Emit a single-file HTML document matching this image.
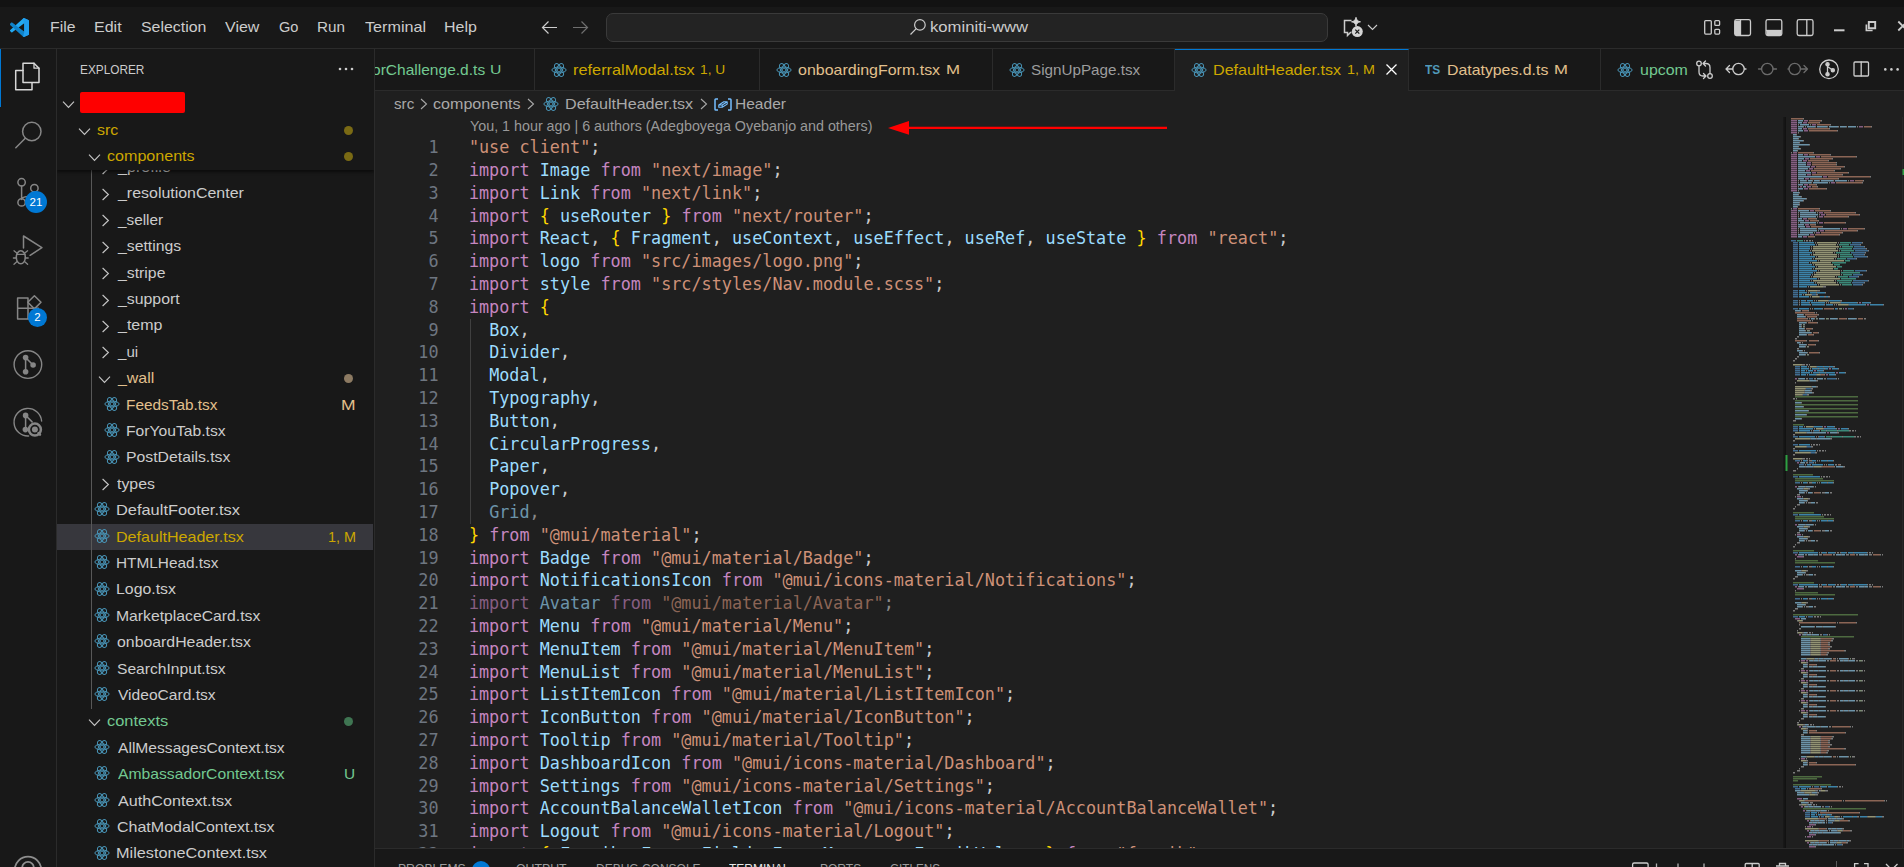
<!DOCTYPE html>
<html lang="en"><head><meta charset="utf-8"><title>DefaultHeader.tsx - kominiti-www - Visual Studio Code</title>
<style>
*{box-sizing:border-box;margin:0;padding:0}
html,body{width:1904px;height:867px;overflow:hidden;background:#1f1f1f}
body{position:relative;font-family:"Liberation Sans", sans-serif;font-size:14.6px;color:#cccccc}
.abs{position:absolute}
.t{position:absolute;display:block;white-space:pre;line-height:20px;height:20px;transform-origin:0 50%}
svg{display:block;overflow:visible}
#topstrip{left:0;top:0;width:1904px;height:7px;background:#121212;z-index:3}
#titlebar{left:0;top:6px;width:1904px;height:43px;background:#181818;border-bottom:1px solid #2b2b2b}
#cmd{left:606px;top:7px;width:722px;height:29px;border:1px solid #3a3a3a;border-radius:7px;background:#232323}
#activity{left:0;top:49px;width:57px;height:818px;background:#181818;border-right:1px solid #2b2b2b}
#sidebar{left:57px;top:49px;width:318px;height:818px;background:#181818;border-right:1px solid #2b2b2b;overflow:hidden}
#tabs{left:375px;top:49px;width:1529px;height:42px;background:#181818;overflow:hidden}
#tabs .bl{position:absolute;left:0;top:41px;width:1529px;height:1px;background:#2b2b2b}
.tab{position:absolute;top:0;height:41px;border-right:1px solid #2b2b2b}
#crumbs{left:375px;top:91px;width:1529px;height:26px}
#editor{left:375px;top:117px;width:1529px;height:731px;overflow:hidden;background:#1f1f1f}
.ln{position:absolute;left:0;width:63.5px;text-align:right;color:#6e7681;font-family:"DejaVu Sans Mono", "Liberation Mono", monospace;font-size:16.8px;height:22.8px;line-height:22.8px}
.cl{position:absolute;left:93.9px;letter-spacing:0.012px;font-family:"DejaVu Sans Mono", "Liberation Mono", monospace;font-size:16.8px;height:22.8px;line-height:22.8px;white-space:pre;color:#cccccc}
.k{color:#c586c0} .v{color:#9cdcfe} .s{color:#ce9178} .b{color:#ffd700}
.dim{opacity:.62}
.badge{border-radius:50%;background:#0078d4;color:#ffffff;font-size:11.5px;text-align:center;line-height:21px}
#panel{left:375px;top:848px;width:1529px;height:19px;background:#181818;border-top:1px solid #2b2b2b;overflow:hidden}
</style></head>
<body>
<div id="topstrip" class="abs"></div>
<div id="titlebar" class="abs">
<svg class="abs" style="left:10px;top:12px" width="19" height="19" viewBox="0 0 100 100"><path d="M96.500 10.800 75.900.900a6.200 6.200 0 0 0-7.100 1.200L29.400 38 12.200 25a4.200 4.200 0 0 0-5.300.2L1.400 30.300a4.200 4.200 0 0 0 0 6.200L16.300 50 1.400 63.600a4.200 4.200 0 0 0 0 6.200l5.500 5a4.200 4.200 0 0 0 5.300.2l17.200-13 39.400 36a6.200 6.200 0 0 0 7.100 1.200l20.600-9.900a6.200 6.200 0 0 0 3.500-5.600V16.400a6.200 6.200 0 0 0-3.500-5.600zM75 72.700 45.100 50 75 27.300z" fill="#23a9f2"/><path d="M96.500 10.800 75.900.900a6.200 6.200 0 0 0-7.100 1.200L75 27.300v45.400l-6.200 25.300a6.200 6.200 0 0 0 7.100 1.200l20.600-9.900a6.200 6.200 0 0 0 3.500-5.600V16.400a6.200 6.200 0 0 0-3.500-5.600z" fill="#1f9cf0" opacity=".9"/><path d="M12.200 25a4.200 4.200 0 0 0-5.300.2L1.400 30.300a4.200 4.200 0 0 0 0 6.200L68.800 98.100 75 72.700z" fill="#0065a9" opacity=".55"/></svg>
<span class="t" style="left:50.04px;top:11px;color:#cccccc;transform:scaleX(1.0803);">File</span>
<span class="t" style="left:94.22px;top:11px;color:#cccccc;transform:scaleX(1.0984);">Edit</span>
<span class="t" style="left:140.98px;top:11px;color:#cccccc;transform:scaleX(1.0897);">Selection</span>
<span class="t" style="left:225.40px;top:11px;color:#cccccc;transform:scaleX(1.0959);">View</span>
<span class="t" style="left:279.07px;top:11px;color:#cccccc;transform:scaleX(1.0013);">Go</span>
<span class="t" style="left:317.48px;top:11px;color:#cccccc;transform:scaleX(1.0426);">Run</span>
<span class="t" style="left:364.78px;top:11px;color:#cccccc;transform:scaleX(1.1066);">Terminal</span>
<span class="t" style="left:444.22px;top:11px;color:#cccccc;transform:scaleX(1.0938);">Help</span>
<svg class="abs" style="left:541px;top:13px" width="17" height="17" viewBox="0 0 17 17" fill="none" stroke="#cccccc" stroke-width="1.200"><path d="M16 8.500H1.800M7.500 2.500 1.500 8.500l6 6"/></svg>
<svg class="abs" style="left:572px;top:13px" width="17" height="17" viewBox="0 0 17 17" fill="none" stroke="#6f6f6f" stroke-width="1.200"><path d="M1 8.500h14.200M9.500 2.500l6 6-6 6"/></svg>
<div id="cmd" class="abs"><svg class="abs" style="left:302px;top:4px" width="18" height="18" viewBox="0 0 18 18" fill="none" stroke="#cccccc" stroke-width="1.200"><circle cx="10.900" cy="6.900" r="5.300"/><path d="M7.200 10.700 1.500 16.500"/></svg><span class="t" style="left:323.42px;top:3px;color:#cccccc;transform:scaleX(1.1417);">kominiti-www</span></div>
<svg class="abs" style="left:1342px;top:11px" width="24" height="24" viewBox="0 0 24 24" fill="none"><path d="M9.500 3.500H2.500V15.500H5.500V18.500L8.500 15.500H9.500" stroke="#cccccc" stroke-width="1.500"/><path d="M14 0.300C14.500 3 15.800 4.300 18.500 4.800 15.800 5.300 14.500 6.600 14 9.300 13.500 6.600 12.200 5.300 9.500 4.800 12.200 4.300 13.500 3 14 0.300z" fill="#d4d4d4" stroke="#d4d4d4" stroke-width=".9" stroke-linejoin="round"/><circle cx="15.300" cy="14.600" r="5.500" fill="#d4d4d4"/><path d="M13.300 12.600l4 4M17.300 12.600l-4 4" stroke="#181818" stroke-width="1.300"/></svg>
<svg class="abs" style="left:1367px;top:18px" width="11" height="7" viewBox="0 0 11 7" fill="none" stroke="#cccccc" stroke-width="1.100"><path d="M1 1l4.500 4.500L10 1"/></svg>
<svg class="abs" style="left:1700px;top:10px" width="204" height="24" viewBox="1700 16 204 24" fill="none" stroke="#cccccc" stroke-width="1.300"><rect x="1704.700" y="20.600" width="6.600" height="13.500" rx="1"/><rect x="1714.800" y="20.600" width="4.800" height="4.800" rx="1"/><rect x="1714.800" y="29.300" width="4.800" height="4.800" rx="1"/><rect x="1734.700" y="19.700" width="15.800" height="15.800" rx="1.800"/><path d="M1735 20.500h5.500v14.500h-5.500z" fill="#cccccc" stroke="none"/><path d="M1740.500 20v15.500"/><rect x="1766" y="19.700" width="15.800" height="15.800" rx="1.800"/><path d="M1766.500 30.500h15v4.500h-15z" fill="#cccccc" stroke="none"/><path d="M1766 30.500h15.800"/><rect x="1797.200" y="19.700" width="15.800" height="15.800" rx="1.800"/><path d="M1806.800 20v15.500"/><path d="M1834 30.300h10.500" stroke-width="2"/><path d="M1868.800 22h6.400v6.200h-6.400z" stroke-width="1.900"/><path d="M1866.400 24.500v6h6.200" stroke-width="1.700"/><path d="M1898.300 21.500l9 9M1898.300 30.500l9-9" stroke-width="1.800"/></svg>
</div>
<div id="activity" class="abs"><div class="abs" style="left:0;top:0;width:1.300px;height:58px;background:#0078d4"></div><svg class="abs" style="left:0;top:0" width="57" height="818" viewBox="0 49 57 818" fill="none" stroke="#868686" stroke-width="1.500" stroke-linejoin="round" stroke-linecap="round"><g stroke="#d7d7d7"><path d="M23 63.200h11l5 5v14.300h-16z"/><path d="M34 63.200v5h5" stroke-width="1.300"/><path d="M23 70.500h-7.300v19.300h16.300v-7"/></g><circle cx="31.800" cy="131.500" r="9.200"/><path d="M25.300 138.200 15.800 147.800"/><circle cx="21.600" cy="182.300" r="3.700"/><circle cx="21.600" cy="202.400" r="3.700"/><circle cx="34.400" cy="188.200" r="3.700"/><path d="M21.600 186v12.700M34.400 192c0 3.200-2.500 4.300-6.500 4.500-3.500.2-6.300 1.200-6.300 3"/><path d="M23.500 248v-12l18.400 11.700-11.800 7.600"/><ellipse cx="20.800" cy="257.300" rx="4.500" ry="6.500"/><path d="M16.500 254.300h8.600M14 250.800l2.800 2.200M27.600 250.800l-2.800 2.200M13.400 258h2.900M25.300 258h2.900M14 264.200l2.800-2.500M27.600 264.200l-2.800-2.500" stroke-width="1.300"/><path d="M17.600 297.900h10.400v10.300h-10.400zM17.600 308.200h10.400v10.700h-10.400zM28 308.200h10.400v10.700h-10.400z"/><path d="M34.400 295.700l6.600 6.600-6.600 6.600-6.600-6.600z"/><circle cx="27.900" cy="364.600" r="13.800" stroke-width="1.400"/><path d="M25.600 357.600v14.200M25.600 357.600l7.500 7.400"/><circle cx="25.600" cy="357.600" r="2.800" fill="#868686" stroke="none"/><circle cx="25.600" cy="371.800" r="2.800" fill="#868686" stroke="none"/><circle cx="33.100" cy="365" r="2.800" fill="#868686" stroke="none"/><path d="M41.600 421a13.800 13.800 0 1 0-13 15" stroke-width="1.400"/><path d="M25.600 415.400v14.200M25.600 415.400l6.500 6.500"/><circle cx="25.600" cy="415.400" r="2.800" fill="#868686" stroke="none"/><circle cx="25.400" cy="429.600" r="2.800" fill="#868686" stroke="none"/><circle cx="34.900" cy="429.600" r="6" stroke-width="2.500"/><circle cx="34.900" cy="429.600" r="3" fill="#868686" stroke="none"/><path d="M38.500 433.200l1.500 1.500" stroke-width="2.500"/><circle cx="28" cy="870" r="13.300" stroke-width="1.800" stroke="#8e8e8e"/><circle cx="28" cy="867.700" r="5.800" stroke-width="1.800" stroke="#8e8e8e"/></svg><div class="abs badge" style="left:25px;top:142.400px;width:22px;height:22px;line-height:22px">21</div><div class="abs badge" style="left:27.900px;top:259.200px;width:19px;height:19px;line-height:19px">2</div></div>
<div id="sidebar" class="abs">
<svg class="abs" style="left:43.5px;top:112.5px" width="9" height="13" viewBox="0 0 9 13" fill="none" stroke="#c5c5c5" stroke-width="1.150"><path d="M1.600 1 7.400 6.500 1.600 12"/></svg>
<span class="t" style="left:60.62px;top:108px;color:#cccccc;transform:scaleX(1.1051);">_profile</span>
<svg class="abs" style="left:43.5px;top:138.9px" width="9" height="13" viewBox="0 0 9 13" fill="none" stroke="#c5c5c5" stroke-width="1.150"><path d="M1.600 1 7.400 6.500 1.600 12"/></svg>
<span class="t" style="left:60.62px;top:134px;color:#cccccc;transform:scaleX(1.0924);">_resolutionCenter</span>
<svg class="abs" style="left:43.5px;top:165.3px" width="9" height="13" viewBox="0 0 9 13" fill="none" stroke="#c5c5c5" stroke-width="1.150"><path d="M1.600 1 7.400 6.500 1.600 12"/></svg>
<span class="t" style="left:60.61px;top:161px;color:#cccccc;transform:scaleX(1.0477);">_seller</span>
<svg class="abs" style="left:43.5px;top:191.7px" width="9" height="13" viewBox="0 0 9 13" fill="none" stroke="#c5c5c5" stroke-width="1.150"><path d="M1.600 1 7.400 6.500 1.600 12"/></svg>
<span class="t" style="left:60.62px;top:187px;color:#cccccc;transform:scaleX(1.0798);">_settings</span>
<svg class="abs" style="left:43.5px;top:218.1px" width="9" height="13" viewBox="0 0 9 13" fill="none" stroke="#c5c5c5" stroke-width="1.150"><path d="M1.600 1 7.400 6.500 1.600 12"/></svg>
<span class="t" style="left:60.62px;top:214px;color:#cccccc;transform:scaleX(1.0826);">_stripe</span>
<svg class="abs" style="left:43.5px;top:244.5px" width="9" height="13" viewBox="0 0 9 13" fill="none" stroke="#c5c5c5" stroke-width="1.150"><path d="M1.600 1 7.400 6.500 1.600 12"/></svg>
<span class="t" style="left:60.62px;top:240px;color:#cccccc;transform:scaleX(1.0861);">_support</span>
<svg class="abs" style="left:43.5px;top:270.9px" width="9" height="13" viewBox="0 0 9 13" fill="none" stroke="#c5c5c5" stroke-width="1.150"><path d="M1.600 1 7.400 6.500 1.600 12"/></svg>
<span class="t" style="left:60.62px;top:266px;color:#cccccc;transform:scaleX(1.0944);">_temp</span>
<svg class="abs" style="left:43.5px;top:297.3px" width="9" height="13" viewBox="0 0 9 13" fill="none" stroke="#c5c5c5" stroke-width="1.150"><path d="M1.600 1 7.400 6.500 1.600 12"/></svg>
<span class="t" style="left:60.60px;top:293px;color:#cccccc;transform:scaleX(1.0341);">_ui</span>
<svg class="abs" style="left:40.5px;top:325.6px" width="13" height="9" viewBox="0 0 13 9" fill="none" stroke="#c5c5c5" stroke-width="1.150"><path d="M1 1.600 6.500 7.400 12 1.600"/></svg>
<span class="t" style="left:60.62px;top:319px;color:#e2c08d;transform:scaleX(1.0910);">_wall</span>
<span class="abs" style="left:287.0px;top:324.6px;width:9px;height:9px;border-radius:50%;background:#8c7a62"></span>
<svg class="abs" style="left:47.0px;top:346.8px" width="16" height="16" viewBox="-8 -8 16 16" fill="none" stroke="#4893b5" stroke-width="1"><ellipse rx="7.100" ry="2.900"/><ellipse rx="7.100" ry="2.900" transform="rotate(60)"/><ellipse rx="7.100" ry="2.900" transform="rotate(120)"/><circle r="1.900" stroke-width="1"/></svg>
<span class="t" style="left:68.87px;top:346px;color:#e2c08d;transform:scaleX(1.0528);">FeedsTab.tsx</span>
<span class="t" style="left:284.20px;top:346px;color:#e2c08d;transform:scaleX(1.1974);">M</span>
<svg class="abs" style="left:47.0px;top:373.2px" width="16" height="16" viewBox="-8 -8 16 16" fill="none" stroke="#4893b5" stroke-width="1"><ellipse rx="7.100" ry="2.900"/><ellipse rx="7.100" ry="2.900" transform="rotate(60)"/><ellipse rx="7.100" ry="2.900" transform="rotate(120)"/><circle r="1.900" stroke-width="1"/></svg>
<span class="t" style="left:68.85px;top:372px;color:#cccccc;transform:scaleX(1.0736);">ForYouTab.tsx</span>
<svg class="abs" style="left:47.0px;top:399.6px" width="16" height="16" viewBox="-8 -8 16 16" fill="none" stroke="#4893b5" stroke-width="1"><ellipse rx="7.100" ry="2.900"/><ellipse rx="7.100" ry="2.900" transform="rotate(60)"/><ellipse rx="7.100" ry="2.900" transform="rotate(120)"/><circle r="1.900" stroke-width="1"/></svg>
<span class="t" style="left:68.84px;top:398px;color:#cccccc;transform:scaleX(1.0812);">PostDetails.tsx</span>
<svg class="abs" style="left:43.5px;top:429.3px" width="9" height="13" viewBox="0 0 9 13" fill="none" stroke="#c5c5c5" stroke-width="1.150"><path d="M1.600 1 7.400 6.500 1.600 12"/></svg>
<span class="t" style="left:60.06px;top:425px;color:#cccccc;transform:scaleX(1.0859);">types</span>
<svg class="abs" style="left:37.4px;top:452.4px" width="16" height="16" viewBox="-8 -8 16 16" fill="none" stroke="#4893b5" stroke-width="1"><ellipse rx="7.100" ry="2.900"/><ellipse rx="7.100" ry="2.900" transform="rotate(60)"/><ellipse rx="7.100" ry="2.900" transform="rotate(120)"/><circle r="1.900" stroke-width="1"/></svg>
<span class="t" style="left:59.19px;top:451px;color:#cccccc;transform:scaleX(1.1232);">DefaultFooter.tsx</span>
<div class="abs" style="left:0;top:475px;width:316px;height:26px;background:#37373d"></div>
<svg class="abs" style="left:37.4px;top:478.8px" width="16" height="16" viewBox="-8 -8 16 16" fill="none" stroke="#4893b5" stroke-width="1"><ellipse rx="7.100" ry="2.900"/><ellipse rx="7.100" ry="2.900" transform="rotate(60)"/><ellipse rx="7.100" ry="2.900" transform="rotate(120)"/><circle r="1.900" stroke-width="1"/></svg>
<span class="t" style="left:59.21px;top:478px;color:#cca700;transform:scaleX(1.1015);">DefaultHeader.tsx</span>
<span class="t" style="left:270.52px;top:478px;color:#cca700;transform:scaleX(0.9872);">1, M</span>
<svg class="abs" style="left:37.4px;top:505.2px" width="16" height="16" viewBox="-8 -8 16 16" fill="none" stroke="#4893b5" stroke-width="1"><ellipse rx="7.100" ry="2.900"/><ellipse rx="7.100" ry="2.900" transform="rotate(60)"/><ellipse rx="7.100" ry="2.900" transform="rotate(120)"/><circle r="1.900" stroke-width="1"/></svg>
<span class="t" style="left:59.27px;top:504px;color:#cccccc;transform:scaleX(1.0524);">HTMLHead.tsx</span>
<svg class="abs" style="left:37.4px;top:531.6px" width="16" height="16" viewBox="-8 -8 16 16" fill="none" stroke="#4893b5" stroke-width="1"><ellipse rx="7.100" ry="2.900"/><ellipse rx="7.100" ry="2.900" transform="rotate(60)"/><ellipse rx="7.100" ry="2.900" transform="rotate(120)"/><circle r="1.900" stroke-width="1"/></svg>
<span class="t" style="left:59.23px;top:530px;color:#cccccc;transform:scaleX(1.0859);">Logo.tsx</span>
<svg class="abs" style="left:37.4px;top:558.0px" width="16" height="16" viewBox="-8 -8 16 16" fill="none" stroke="#4893b5" stroke-width="1"><ellipse rx="7.100" ry="2.900"/><ellipse rx="7.100" ry="2.900" transform="rotate(60)"/><ellipse rx="7.100" ry="2.900" transform="rotate(120)"/><circle r="1.900" stroke-width="1"/></svg>
<span class="t" style="left:59.24px;top:557px;color:#cccccc;transform:scaleX(1.0787);">MarketplaceCard.tsx</span>
<svg class="abs" style="left:37.4px;top:584.4px" width="16" height="16" viewBox="-8 -8 16 16" fill="none" stroke="#4893b5" stroke-width="1"><ellipse rx="7.100" ry="2.900"/><ellipse rx="7.100" ry="2.900" transform="rotate(60)"/><ellipse rx="7.100" ry="2.900" transform="rotate(120)"/><circle r="1.900" stroke-width="1"/></svg>
<span class="t" style="left:59.87px;top:583px;color:#cccccc;transform:scaleX(1.0861);">onboardHeader.tsx</span>
<svg class="abs" style="left:37.4px;top:610.8px" width="16" height="16" viewBox="-8 -8 16 16" fill="none" stroke="#4893b5" stroke-width="1"><ellipse rx="7.100" ry="2.900"/><ellipse rx="7.100" ry="2.900" transform="rotate(60)"/><ellipse rx="7.100" ry="2.900" transform="rotate(120)"/><circle r="1.900" stroke-width="1"/></svg>
<span class="t" style="left:59.80px;top:610px;color:#cccccc;transform:scaleX(1.0709);">SearchInput.tsx</span>
<svg class="abs" style="left:37.4px;top:637.2px" width="16" height="16" viewBox="-8 -8 16 16" fill="none" stroke="#4893b5" stroke-width="1"><ellipse rx="7.100" ry="2.900"/><ellipse rx="7.100" ry="2.900" transform="rotate(60)"/><ellipse rx="7.100" ry="2.900" transform="rotate(120)"/><circle r="1.900" stroke-width="1"/></svg>
<span class="t" style="left:60.50px;top:636px;color:#cccccc;transform:scaleX(1.0676);">VideoCard.tsx</span>
<svg class="abs" style="left:30.9px;top:668.8px" width="13" height="9" viewBox="0 0 13 9" fill="none" stroke="#c5c5c5" stroke-width="1.150"><path d="M1 1.600 6.500 7.400 12 1.600"/></svg>
<span class="t" style="left:50.04px;top:662px;color:#73c991;transform:scaleX(1.1259);">contexts</span>
<span class="abs" style="left:287.0px;top:667.8px;width:9px;height:9px;border-radius:50%;background:#3f7552"></span>
<svg class="abs" style="left:37.4px;top:690.0px" width="16" height="16" viewBox="-8 -8 16 16" fill="none" stroke="#4893b5" stroke-width="1"><ellipse rx="7.100" ry="2.900"/><ellipse rx="7.100" ry="2.900" transform="rotate(60)"/><ellipse rx="7.100" ry="2.900" transform="rotate(120)"/><circle r="1.900" stroke-width="1"/></svg>
<span class="t" style="left:60.50px;top:689px;color:#cccccc;transform:scaleX(1.0698);">AllMessagesContext.tsx</span>
<svg class="abs" style="left:37.4px;top:716.4px" width="16" height="16" viewBox="-8 -8 16 16" fill="none" stroke="#4893b5" stroke-width="1"><ellipse rx="7.100" ry="2.900"/><ellipse rx="7.100" ry="2.900" transform="rotate(60)"/><ellipse rx="7.100" ry="2.900" transform="rotate(120)"/><circle r="1.900" stroke-width="1"/></svg>
<span class="t" style="left:60.50px;top:715px;color:#73c991;transform:scaleX(1.0754);">AmbassadorContext.tsx</span>
<span class="t" style="left:287.04px;top:715px;color:#73c991;transform:scaleX(1.0574);">U</span>
<svg class="abs" style="left:37.4px;top:742.8px" width="16" height="16" viewBox="-8 -8 16 16" fill="none" stroke="#4893b5" stroke-width="1"><ellipse rx="7.100" ry="2.900"/><ellipse rx="7.100" ry="2.900" transform="rotate(60)"/><ellipse rx="7.100" ry="2.900" transform="rotate(120)"/><circle r="1.900" stroke-width="1"/></svg>
<span class="t" style="left:60.50px;top:742px;color:#cccccc;transform:scaleX(1.1075);">AuthContext.tsx</span>
<svg class="abs" style="left:37.4px;top:769.2px" width="16" height="16" viewBox="-8 -8 16 16" fill="none" stroke="#4893b5" stroke-width="1"><ellipse rx="7.100" ry="2.900"/><ellipse rx="7.100" ry="2.900" transform="rotate(60)"/><ellipse rx="7.100" ry="2.900" transform="rotate(120)"/><circle r="1.900" stroke-width="1"/></svg>
<span class="t" style="left:59.70px;top:768px;color:#cccccc;transform:scaleX(1.0967);">ChatModalContext.tsx</span>
<svg class="abs" style="left:37.4px;top:795.6px" width="16" height="16" viewBox="-8 -8 16 16" fill="none" stroke="#4893b5" stroke-width="1"><ellipse rx="7.100" ry="2.900"/><ellipse rx="7.100" ry="2.900" transform="rotate(60)"/><ellipse rx="7.100" ry="2.900" transform="rotate(120)"/><circle r="1.900" stroke-width="1"/></svg>
<span class="t" style="left:59.20px;top:794px;color:#cccccc;transform:scaleX(1.1142);">MilestoneContext.tsx</span>
<div class="abs" style="left:34px;top:121px;width:1px;height:539px;background:#585858"></div>
<div class="abs" style="left:0;top:0;width:317px;height:121px;background:#181818;box-shadow:0 2px 3px rgba(0,0,0,.55)"></div>
<span class="t" style="left:23.05px;top:11px;color:#cccccc;font-size:12.4px;transform:scaleX(0.9541);">EXPLORER</span>
<svg class="abs" style="left:281px;top:18px" width="16" height="4" viewBox="0 0 16 4" fill="#cccccc"><circle cx="2" cy="2" r="1.300"/><circle cx="8" cy="2" r="1.300"/><circle cx="14" cy="2" r="1.300"/></svg>
<svg class="abs" style="left:4.5px;top:50.5px" width="13" height="9" viewBox="0 0 13 9" fill="none" stroke="#c5c5c5" stroke-width="1.150"><path d="M1 1.600 6.500 7.400 12 1.600"/></svg>
<div class="abs" style="left:23px;top:43px;width:105px;height:21px;background:#fe0000;border-radius:2px"></div>
<svg class="abs" style="left:20.5px;top:77.5px" width="13" height="9" viewBox="0 0 13 9" fill="none" stroke="#c5c5c5" stroke-width="1.150"><path d="M1 1.600 6.500 7.400 12 1.600"/></svg>
<span class="t" style="left:40.10px;top:71px;color:#cca700;transform:scaleX(1.0927);">src</span>
<span class="abs" style="left:287.0px;top:76.5px;width:9px;height:9px;border-radius:50%;background:#7a6a14"></span>
<svg class="abs" style="left:30.5px;top:104.0px" width="13" height="9" viewBox="0 0 13 9" fill="none" stroke="#c5c5c5" stroke-width="1.150"><path d="M1 1.600 6.500 7.400 12 1.600"/></svg>
<span class="t" style="left:50.06px;top:97px;color:#cca700;transform:scaleX(1.1023);">components</span>
<span class="abs" style="left:287.0px;top:103.0px;width:9px;height:9px;border-radius:50%;background:#7a6a14"></span>
</div>
<div id="tabs" class="abs"><div class="bl"></div>
<div class="tab" style="left:0px;width:160px;"></div><span class="t" style="left:-3.12px;top:11px;color:#73c991;transform:scaleX(1.0647);">orChallenge.d.ts</span><span class="t" style="left:114.62px;top:11px;color:#73c991;font-size:13.6px;transform:scaleX(1.1610);">U</span>
<div class="tab" style="left:160px;width:225px;"></div><svg class="abs" style="left:175.5px;top:13.0px" width="16" height="16" viewBox="-8 -8 16 16" fill="none" stroke="#4893b5" stroke-width="1"><ellipse rx="7.100" ry="2.900"/><ellipse rx="7.100" ry="2.900" transform="rotate(60)"/><ellipse rx="7.100" ry="2.900" transform="rotate(120)"/><circle r="1.900" stroke-width="1"/></svg><span class="t" style="left:197.74px;top:11px;color:#cca700;transform:scaleX(1.1189);">referralModal.tsx</span><span class="t" style="left:325.47px;top:11px;color:#cca700;font-size:13.6px;transform:scaleX(1.0110);">1, U</span>
<div class="tab" style="left:385px;width:233px;"></div><svg class="abs" style="left:400.6px;top:13.0px" width="16" height="16" viewBox="-8 -8 16 16" fill="none" stroke="#4893b5" stroke-width="1"><ellipse rx="7.100" ry="2.900"/><ellipse rx="7.100" ry="2.900" transform="rotate(60)"/><ellipse rx="7.100" ry="2.900" transform="rotate(120)"/><circle r="1.900" stroke-width="1"/></svg><span class="t" style="left:423.06px;top:11px;color:#e2c08d;transform:scaleX(1.0950);">onboardingForm.tsx</span><span class="t" style="left:570.65px;top:11px;color:#e2c08d;font-size:13.6px;transform:scaleX(1.2418);">M</span>
<div class="tab" style="left:618px;width:182px;"></div><svg class="abs" style="left:634.0px;top:13.0px" width="16" height="16" viewBox="-8 -8 16 16" fill="none" stroke="#4893b5" stroke-width="1"><ellipse rx="7.100" ry="2.900"/><ellipse rx="7.100" ry="2.900" transform="rotate(60)"/><ellipse rx="7.100" ry="2.900" transform="rotate(120)"/><circle r="1.900" stroke-width="1"/></svg><span class="t" style="left:656.32px;top:11px;color:#9d9d9d;transform:scaleX(1.0426);">SignUpPage.tsx</span>
<div class="tab" style="left:800px;width:234px;background:#1f1f1f;height:42px;border-top:1px solid #0078d4;"></div><svg class="abs" style="left:816.0px;top:13.0px" width="16" height="16" viewBox="-8 -8 16 16" fill="none" stroke="#4893b5" stroke-width="1"><ellipse rx="7.100" ry="2.900"/><ellipse rx="7.100" ry="2.900" transform="rotate(60)"/><ellipse rx="7.100" ry="2.900" transform="rotate(120)"/><circle r="1.900" stroke-width="1"/></svg><span class="t" style="left:838.21px;top:11px;color:#cca700;transform:scaleX(1.1041);">DefaultHeader.tsx</span><span class="t" style="left:972.42px;top:11px;color:#cca700;font-size:13.6px;transform:scaleX(1.0557);">1, M</span><svg class="abs" style="left:1011px;top:15.200000000000003px" width="11" height="11" viewBox="0 0 11 11" stroke="#ffffff" stroke-width="1.300" fill="none"><path d="M.5.5l10 10M10.500.5l-10 10"/></svg>
<div class="tab" style="left:1034px;width:192px;"></div><span class="t" style="left:1050.48px;top:11px;color:#519aba;font-size:12.6px;font-weight:bold;transform:scaleX(0.9485);">TS</span><span class="t" style="left:1072.13px;top:11px;color:#e2c08d;transform:scaleX(1.0861);">Datatypes.d.ts</span><span class="t" style="left:1178.76px;top:11px;color:#e2c08d;font-size:13.6px;transform:scaleX(1.2309);">M</span>
<div class="tab" style="left:1226px;width:303px;"></div><svg class="abs" style="left:1242.4px;top:13.0px" width="16" height="16" viewBox="-8 -8 16 16" fill="none" stroke="#4893b5" stroke-width="1"><ellipse rx="7.100" ry="2.900"/><ellipse rx="7.100" ry="2.900" transform="rotate(60)"/><ellipse rx="7.100" ry="2.900" transform="rotate(120)"/><circle r="1.900" stroke-width="1"/></svg><span class="t" style="left:1264.74px;top:11px;color:#73c991;transform:scaleX(1.0940);">upcom</span>
<div class="abs" style="left:1315px;top:0;width:214px;height:41px;background:#181818"></div>
<svg class="abs" style="left:1315px;top:0" width="214" height="42" viewBox="1690 49 214 42" fill="none" stroke="#cccccc" stroke-width="1.300" stroke-linecap="round" stroke-linejoin="round"><circle cx="1699" cy="63.500" r="2.300"/><circle cx="1710" cy="76" r="2.300"/><path d="M1699 66v6c0 2.500 1.500 4 4 4h2.500M1703.500 73.500l2.500 2.500-2.500 2.500M1710 73.500v-6c0-2.500-1.500-4-4-4h-2.500M1705.500 61l-2.500 2.500 2.500 2.500"/><circle cx="1738.500" cy="69" r="5.700"/><path d="M1732.500 69h-6M1729.500 65.500l-3.500 3.500 3.500 3.500M1744.500 69h1.500"/><g stroke="#6b6b6b"><circle cx="1767.300" cy="69" r="5.700"/><path d="M1758.500 69h3M1773 69h3.500"/><circle cx="1794.700" cy="69" r="5.700"/><path d="M1788 69h1M1800.500 69h7M1804 65.500l3.500 3.500-3.500 3.500"/></g><circle cx="1829" cy="69.300" r="9.300"/><path d="M1827.500 64.500v9.500M1827.500 66.500l5 3.500"/><circle cx="1827.500" cy="64.300" r="1.600" fill="#cccccc"/><circle cx="1827.500" cy="74.300" r="1.600" fill="#cccccc"/><circle cx="1832.800" cy="70.300" r="1.600" fill="#cccccc"/><rect x="1854" y="62" width="14.500" height="14" rx="1"/><path d="M1861.200 62v14"/><g fill="#cccccc" stroke="none"><circle cx="1885.300" cy="69.400" r="1.300"/><circle cx="1891.400" cy="69.400" r="1.300"/><circle cx="1897.600" cy="69.400" r="1.300"/></g></svg>
</div>
<div id="crumbs" class="abs">
<span class="t" style="left:18.82px;top:3px;color:#a9a9a9;transform:scaleX(1.0394);">src</span><svg class="abs" style="left:45.2px;top:7px" width="8" height="12" viewBox="0 0 8 12" fill="none" stroke="#a9a9a9" stroke-width="1.100"><path d="M1 1l5.500 5L1 11"/></svg><span class="t" style="left:58.06px;top:3px;color:#a9a9a9;transform:scaleX(1.1023);">components</span><svg class="abs" style="left:151.7px;top:7px" width="8" height="12" viewBox="0 0 8 12" fill="none" stroke="#a9a9a9" stroke-width="1.100"><path d="M1 1l5.500 5L1 11"/></svg>
<svg class="abs" style="left:168.3px;top:5.0px" width="16" height="16" viewBox="-8 -8 16 16" fill="none" stroke="#4893b5" stroke-width="1"><ellipse rx="7.100" ry="2.900"/><ellipse rx="7.100" ry="2.900" transform="rotate(60)"/><ellipse rx="7.100" ry="2.900" transform="rotate(120)"/><circle r="1.900" stroke-width="1"/></svg>
<span class="t" style="left:190.11px;top:3px;color:#a9a9a9;transform:scaleX(1.1041);">DefaultHeader.tsx</span><svg class="abs" style="left:325.2px;top:7px" width="8" height="12" viewBox="0 0 8 12" fill="none" stroke="#a9a9a9" stroke-width="1.100"><path d="M1 1l5.500 5L1 11"/></svg>
<svg class="abs" style="left:338.5px;top:6.5px" width="18" height="13" viewBox="0 0 18 13" fill="none" stroke="#75beff" stroke-width="1.500" stroke-linejoin="round"><path d="M4 1H1.800Q1 1 1 1.800V11.200Q1 12 1.800 12H4M14 1h2.200Q17 1 17 1.800V11.200Q17 12 16.200 12H14"/><path d="M4.800 7l5-3.200h3.400l-5 3.200zM4.800 7v2.300h3.400l5-3.200V3.800M8.200 7v2.300" stroke-width="1.100"/></svg>
<span class="t" style="left:360.36px;top:3px;color:#a9a9a9;transform:scaleX(1.0645);">Header</span>
</div>
<div id="editor" class="abs">
<span class="t" style="left:94.91px;top:-1px;color:#999999;transform:scaleX(0.9802);">You, 1 hour ago | 6 authors (Adegboyega Oyebanjo and others)</span>
<svg class="abs" style="left:512px;top:2px" width="282" height="18" viewBox="887 119 282 18"><path d="M907 127.900H1167" stroke="#ff0000" stroke-width="2.200"/><path d="M888 127.900 909 121.100V134.800z" fill="#ff0000"/></svg>
<div class="ln" style="top:19.2px">1</div><div class="cl" style="top:19.2px"><span class="s">&quot;use client&quot;</span>;</div>
<div class="ln" style="top:42.0px">2</div><div class="cl" style="top:42.0px"><span class="k">import</span> <span class="v">Image</span> <span class="k">from</span> <span class="s">&quot;next/image&quot;</span>;</div>
<div class="ln" style="top:64.8px">3</div><div class="cl" style="top:64.8px"><span class="k">import</span> <span class="v">Link</span> <span class="k">from</span> <span class="s">&quot;next/link&quot;</span>;</div>
<div class="ln" style="top:87.6px">4</div><div class="cl" style="top:87.6px"><span class="k">import</span> <span class="b">{</span> <span class="v">useRouter</span> <span class="b">}</span> <span class="k">from</span> <span class="s">&quot;next/router&quot;</span>;</div>
<div class="ln" style="top:110.4px">5</div><div class="cl" style="top:110.4px"><span class="k">import</span> <span class="v">React</span>, <span class="b">{</span> <span class="v">Fragment</span>, <span class="v">useContext</span>, <span class="v">useEffect</span>, <span class="v">useRef</span>, <span class="v">useState</span> <span class="b">}</span> <span class="k">from</span> <span class="s">&quot;react&quot;</span>;</div>
<div class="ln" style="top:133.2px">6</div><div class="cl" style="top:133.2px"><span class="k">import</span> <span class="v">logo</span> <span class="k">from</span> <span class="s">&quot;src/images/logo.png&quot;</span>;</div>
<div class="ln" style="top:156.0px">7</div><div class="cl" style="top:156.0px"><span class="k">import</span> <span class="v">style</span> <span class="k">from</span> <span class="s">&quot;src/styles/Nav.module.scss&quot;</span>;</div>
<div class="ln" style="top:178.8px">8</div><div class="cl" style="top:178.8px"><span class="k">import</span> <span class="b">{</span></div>
<div class="ln" style="top:201.6px">9</div><div class="cl" style="top:201.6px">  <span class="v">Box</span>,</div>
<div class="ln" style="top:224.4px">10</div><div class="cl" style="top:224.4px">  <span class="v">Divider</span>,</div>
<div class="ln" style="top:247.2px">11</div><div class="cl" style="top:247.2px">  <span class="v">Modal</span>,</div>
<div class="ln" style="top:270.0px">12</div><div class="cl" style="top:270.0px">  <span class="v">Typography</span>,</div>
<div class="ln" style="top:292.8px">13</div><div class="cl" style="top:292.8px">  <span class="v">Button</span>,</div>
<div class="ln" style="top:315.6px">14</div><div class="cl" style="top:315.6px">  <span class="v">CircularProgress</span>,</div>
<div class="ln" style="top:338.4px">15</div><div class="cl" style="top:338.4px">  <span class="v">Paper</span>,</div>
<div class="ln" style="top:361.2px">16</div><div class="cl" style="top:361.2px">  <span class="v">Popover</span>,</div>
<div class="ln" style="top:384.0px">17</div><div class="cl" style="top:384.0px">  <span class="dim"><span class="v">Grid</span>,</span></div>
<div class="ln" style="top:406.8px">18</div><div class="cl" style="top:406.8px"><span class="b">}</span> <span class="k">from</span> <span class="s">&quot;@mui/material&quot;</span>;</div>
<div class="ln" style="top:429.6px">19</div><div class="cl" style="top:429.6px"><span class="k">import</span> <span class="v">Badge</span> <span class="k">from</span> <span class="s">&quot;@mui/material/Badge&quot;</span>;</div>
<div class="ln" style="top:452.4px">20</div><div class="cl" style="top:452.4px"><span class="k">import</span> <span class="v">NotificationsIcon</span> <span class="k">from</span> <span class="s">&quot;@mui/icons-material/Notifications&quot;</span>;</div>
<div class="ln" style="top:475.2px">21</div><div class="cl" style="top:475.2px"><span class="dim"><span class="k">import</span> <span class="v">Avatar</span> <span class="k">from</span> <span class="s">&quot;@mui/material/Avatar&quot;</span>;</span></div>
<div class="ln" style="top:498.0px">22</div><div class="cl" style="top:498.0px"><span class="k">import</span> <span class="v">Menu</span> <span class="k">from</span> <span class="s">&quot;@mui/material/Menu&quot;</span>;</div>
<div class="ln" style="top:520.8px">23</div><div class="cl" style="top:520.8px"><span class="k">import</span> <span class="v">MenuItem</span> <span class="k">from</span> <span class="s">&quot;@mui/material/MenuItem&quot;</span>;</div>
<div class="ln" style="top:543.6px">24</div><div class="cl" style="top:543.6px"><span class="k">import</span> <span class="v">MenuList</span> <span class="k">from</span> <span class="s">&quot;@mui/material/MenuList&quot;</span>;</div>
<div class="ln" style="top:566.4px">25</div><div class="cl" style="top:566.4px"><span class="k">import</span> <span class="v">ListItemIcon</span> <span class="k">from</span> <span class="s">&quot;@mui/material/ListItemIcon&quot;</span>;</div>
<div class="ln" style="top:589.2px">26</div><div class="cl" style="top:589.2px"><span class="k">import</span> <span class="v">IconButton</span> <span class="k">from</span> <span class="s">&quot;@mui/material/IconButton&quot;</span>;</div>
<div class="ln" style="top:612.0px">27</div><div class="cl" style="top:612.0px"><span class="k">import</span> <span class="v">Tooltip</span> <span class="k">from</span> <span class="s">&quot;@mui/material/Tooltip&quot;</span>;</div>
<div class="ln" style="top:634.8px">28</div><div class="cl" style="top:634.8px"><span class="k">import</span> <span class="v">DashboardIcon</span> <span class="k">from</span> <span class="s">&quot;@mui/icons-material/Dashboard&quot;</span>;</div>
<div class="ln" style="top:657.6px">29</div><div class="cl" style="top:657.6px"><span class="k">import</span> <span class="v">Settings</span> <span class="k">from</span> <span class="s">&quot;@mui/icons-material/Settings&quot;</span>;</div>
<div class="ln" style="top:680.4px">30</div><div class="cl" style="top:680.4px"><span class="k">import</span> <span class="v">AccountBalanceWalletIcon</span> <span class="k">from</span> <span class="s">&quot;@mui/icons-material/AccountBalanceWallet&quot;</span>;</div>
<div class="ln" style="top:703.2px">31</div><div class="cl" style="top:703.2px"><span class="k">import</span> <span class="v">Logout</span> <span class="k">from</span> <span class="s">&quot;@mui/icons-material/Logout&quot;</span>;</div>
<div class="ln" style="top:726.0px">32</div><div class="cl" style="top:726.0px"><span class="k">import</span> <span class="b">{</span> <span class="v">Formik</span>, <span class="v">Form</span>, <span class="v">Field</span>, <span class="v">ErrorMessage</span>, <span class="v">FormikValues</span> <span class="b">}</span> <span class="k">from</span> <span class="s">&quot;formik&quot;</span>;</div>
<div class="abs" style="left:94.600px;top:201.6px;width:1px;height:205.2px;background:#404040"></div>
<svg class="abs" style="left:1408px;top:0" width="121" height="731" viewBox="1783 117 121 731">
<rect x="1783" y="117" width="3" height="731" fill="#000" opacity=".22"/><rect x="1784.500" y="117" width="1.500" height="731" fill="#000" opacity=".25"/>
<path d="M1791 118.8h12M1809 120.8h12M1808 122.8h11M1817 124.8h13M1864 126.8h7M1808 128.8h21M1809 130.8h28M1798 152.8h15M1809 154.8h21M1821 156.8h35M1810 158.8h22M1808 160.8h20M1812 162.8h24M1812 164.8h24M1816 166.8h28M1814 168.8h26M1811 170.8h23M1817 172.8h31M1812 174.8h30M1828 176.8h42M1810 178.8h28M1855 180.8h8M1836 182.8h26M1809 184.8h7M1812 186.8h5M1809 188.8h17M1798 208.8h21M1815 210.8h15M1824 212.8h31M1826 214.8h33M1824 216.8h24M1808 218.8h8M1810 220.8h8M1824 222.8h21M1810 224.8h5M1811 226.8h11M1848 228.8h16M1825 230.8h32M1821 232.8h21M1815 234.8h24M1808 236.8h6M1824 308.8h9M1802 310.8h6M1795 312.8h19M1805 314.8h13M1807 316.8h9M1797 318.8h10M1839 318.8h7M1858 318.8h5M1797 320.8h13M1808 322.8h9M1806 328.8h6M1813 332.8h5M1808 334.8h5M1795 340.8h11M1809 340.8h9M1808 344.8h7M1809 352.8h10M1821 374.8h3M1838 464.8h2M1822 466.8h12M1814 492.8h6M1814 530.8h6M1823 554.8h9M1850 554.8h5M1873 554.8h7M1823 586.8h9M1850 586.8h5M1873 586.8h7M1799 622.8h37M1839 622.8h17M1821 638.8h11M1821 640.8h10M1821 642.8h7M1821 644.8h7M1821 646.8h9M1821 648.8h7M1821 650.8h23M1821 652.8h6M1821 654.8h5M1833 658.8h2M1830 660.8h6M1809 664.8h7M1830 670.8h6M1809 674.8h7M1830 680.8h6M1809 684.8h7M1830 690.8h6M1809 694.8h7M1830 700.8h6M1809 704.8h7M1830 710.8h6M1809 714.8h7M1832 726.8h18M1809 730.8h7M1809 732.8h36M1821 736.8h11M1821 738.8h10M1821 740.8h7M1821 742.8h7M1821 744.8h9M1821 746.8h7M1821 748.8h23M1821 750.8h6M1821 752.8h5M1833 756.8h2M1809 762.8h7M1809 764.8h46M1809 788.8h12M1805 800.8h37M1845 800.8h39M1820 812.8h39M1819 818.8h7M1840 820.8h8M1819 828.8h7M1843 830.8h7M1819 840.8h9M1842 842.8h4" stroke="#ce9178" stroke-width="1.500" opacity=".62" fill="none"/>
<path d="M1803 118.8h1M1821 120.8h1M1819 122.8h1M1798 124.8h1M1810 124.8h1M1830 124.8h1M1803 126.8h1M1805 126.8h1M1815 126.8h1M1827 126.8h1M1838 126.8h1M1846 126.8h1M1857 126.8h1M1871 126.8h1M1829 128.8h1M1837 130.8h1M1798 132.8h1M1796 134.8h1M1800 136.8h1M1798 138.8h1M1803 140.8h1M1799 142.8h1M1809 144.8h1M1798 146.8h1M1800 148.8h1M1797 150.8h1M1791 152.8h1M1813 152.8h1M1830 154.8h1M1856 156.8h1M1832 158.8h1M1828 160.8h1M1836 162.8h1M1836 164.8h1M1844 166.8h1M1840 168.8h1M1834 170.8h1M1848 172.8h1M1842 174.8h1M1870 176.8h1M1838 178.8h1M1798 180.8h1M1806 180.8h1M1812 180.8h1M1819 180.8h1M1833 180.8h1M1848 180.8h1M1863 180.8h1M1798 182.8h1M1811 182.8h1M1829 182.8h1M1862 182.8h1M1816 184.8h1M1798 186.8h1M1817 186.8h1M1826 188.8h1M1798 190.8h1M1799 192.8h1M1798 194.8h1M1801 196.8h1M1806 198.8h1M1803 200.8h1M1799 202.8h1M1799 204.8h1M1797 206.8h1M1791 208.8h1M1819 208.8h1M1830 210.8h1M1798 212.8h1M1817 212.8h1M1855 212.8h1M1798 214.8h1M1819 214.8h1M1859 214.8h1M1798 216.8h1M1817 216.8h1M1848 216.8h1M1816 218.8h1M1818 220.8h1M1798 222.8h1M1817 222.8h1M1845 222.8h1M1815 224.8h1M1822 226.8h1M1798 228.8h1M1816 228.8h1M1841 228.8h1M1864 228.8h1M1798 230.8h1M1818 230.8h1M1857 230.8h1M1798 232.8h1M1814 232.8h1M1842 232.8h1M1839 234.8h1M1814 236.8h1M1804 240.8h1M1806 240.8h1M1807 240.8h1M1809 240.8h1M1810 240.8h1M1812 240.8h1M1815 242.8h1M1838 242.8h1M1862 242.8h1M1816 244.8h1M1837 244.8h1M1860 244.8h1M1811 246.8h1M1840 246.8h1M1864 246.8h1M1811 248.8h1M1837 248.8h1M1866 248.8h1M1810 250.8h1M1839 250.8h1M1868 250.8h1M1813 252.8h1M1834 252.8h1M1865 252.8h1M1811 254.8h1M1838 254.8h1M1864 254.8h1M1816 256.8h1M1838 256.8h1M1867 256.8h1M1813 258.8h1M1835 258.8h1M1856 258.8h1M1818 260.8h1M1810 262.8h1M1813 264.8h1M1816 266.8h1M1813 268.8h1M1818 270.8h1M1841 270.8h1M1866 270.8h1M1814 272.8h1M1812 274.8h1M1841 274.8h1M1862 274.8h1M1811 276.8h1M1836 276.8h1M1858 276.8h1M1818 278.8h1M1811 280.8h1M1835 280.8h1M1868 280.8h1M1815 282.8h1M1837 282.8h1M1864 282.8h1M1818 284.8h1M1840 284.8h1M1862 284.8h1M1808 286.8h1M1823 286.8h1M1824 286.8h1M1825 286.8h1M1806 290.8h1M1817 290.8h1M1818 290.8h1M1819 290.8h1M1808 292.8h1M1816 292.8h1M1825 292.8h1M1803 294.8h1M1811 294.8h1M1816 294.8h1M1817 294.8h1M1810 296.8h1M1819 296.8h1M1824 296.8h1M1825 296.8h1M1828 296.8h1M1829 296.8h1M1799 300.8h1M1805 300.8h1M1814 300.8h1M1816 300.8h1M1828 300.8h1M1840 300.8h1M1841 300.8h1M1799 302.8h1M1809 302.8h1M1826 302.8h1M1828 302.8h1M1840 302.8h1M1857 302.8h1M1870 302.8h1M1799 304.8h1M1810 304.8h1M1824 304.8h1M1834 304.8h1M1836 304.8h1M1848 304.8h1M1865 304.8h1M1883 304.8h1M1810 308.8h1M1812 308.8h1M1822 308.8h1M1833 308.8h1M1837 308.8h1M1843 308.8h1M1853 308.8h1M1800 310.8h1M1808 310.8h1M1814 312.8h1M1816 312.8h1M1803 314.8h1M1818 314.8h1M1805 316.8h1M1816 316.8h1M1807 318.8h1M1809 318.8h1M1814 318.8h1M1817 318.8h1M1824 318.8h1M1828 318.8h1M1837 318.8h1M1846 318.8h1M1856 318.8h1M1864 318.8h1M1865 318.8h1M1810 320.8h1M1812 320.8h1M1806 322.8h1M1817 322.8h1M1801 324.8h1M1804 324.8h1M1801 326.8h1M1804 326.8h1M1804 328.8h1M1812 328.8h1M1805 330.8h1M1809 330.8h1M1811 332.8h1M1818 332.8h1M1806 334.8h1M1813 334.8h1M1797 336.8h1M1798 336.8h1M1795 338.8h1M1796 338.8h1M1806 340.8h1M1818 340.8h1M1800 342.8h1M1802 342.8h1M1806 344.8h1M1815 344.8h1M1805 346.8h1M1808 346.8h1M1797 348.8h1M1798 348.8h1M1802 350.8h1M1804 350.8h1M1807 352.8h1M1819 352.8h1M1805 354.8h1M1808 354.8h1M1797 356.8h1M1798 356.8h1M1795 358.8h1M1796 358.8h1M1793 360.8h1M1794 360.8h1M1802 364.8h1M1803 364.8h1M1804 364.8h1M1806 364.8h1M1807 364.8h1M1809 364.8h1M1808 366.8h1M1816 366.8h1M1823 366.8h1M1829 366.8h1M1833 366.8h1M1834 366.8h1M1810 368.8h1M1818 368.8h1M1824 368.8h1M1838 368.8h1M1806 370.8h1M1823 370.8h1M1811 372.8h1M1819 372.8h1M1825 372.8h1M1845 372.8h1M1807 374.8h1M1816 374.8h1M1820 374.8h1M1824 374.8h1M1835 374.8h1M1798 378.8h1M1806 378.8h1M1807 378.8h1M1814 378.8h1M1815 378.8h1M1824 378.8h1M1825 378.8h1M1836 378.8h1M1838 378.8h1M1809 380.8h1M1816 380.8h1M1817 380.8h1M1795 382.8h1M1811 386.8h1M1816 386.8h1M1817 386.8h1M1805 388.8h1M1811 388.8h1M1812 388.8h1M1804 390.8h1M1810 390.8h1M1811 390.8h1M1804 392.8h1M1812 392.8h1M1813 392.8h1M1802 394.8h1M1807 394.8h1M1808 394.8h1M1793 398.8h1M1794 398.8h1M1796 398.8h1M1801 402.8h1M1803 406.8h1M1808 410.8h1M1806 414.8h1M1801 418.8h1M1793 420.8h1M1794 420.8h1M1795 420.8h1M1804 426.8h1M1813 426.8h1M1822 426.8h1M1834 426.8h1M1814 428.8h1M1823 428.8h1M1836 428.8h1M1848 428.8h1M1811 430.8h1M1813 430.8h1M1819 430.8h1M1826 430.8h1M1837 430.8h1M1849 430.8h1M1850 430.8h1M1852 430.8h1M1853 430.8h1M1855 430.8h1M1806 432.8h1M1812 432.8h1M1837 432.8h1M1838 432.8h1M1793 434.8h1M1794 434.8h1M1816 436.8h1M1818 436.8h1M1824 436.8h1M1831 436.8h1M1842 436.8h1M1854 436.8h1M1855 436.8h1M1857 436.8h1M1858 436.8h1M1860 436.8h1M1810 438.8h1M1816 438.8h1M1830 438.8h1M1831 438.8h1M1793 440.8h1M1794 440.8h1M1811 444.8h1M1813 444.8h1M1814 444.8h1M1816 444.8h1M1817 444.8h1M1819 444.8h1M1806 446.8h1M1811 446.8h1M1812 446.8h1M1793 448.8h1M1794 448.8h1M1817 450.8h1M1819 450.8h1M1820 450.8h1M1822 450.8h1M1823 450.8h1M1825 450.8h1M1810 452.8h1M1815 452.8h1M1816 452.8h1M1793 454.8h1M1794 454.8h1M1802 458.8h1M1803 458.8h1M1804 458.8h1M1806 458.8h1M1807 458.8h1M1809 458.8h1M1801 460.8h1M1807 460.8h1M1809 460.8h1M1810 460.8h1M1811 460.8h1M1817 460.8h1M1819 460.8h1M1827 460.8h1M1833 460.8h1M1800 462.8h1M1806 462.8h1M1807 462.8h1M1813 462.8h1M1815 462.8h1M1805 464.8h1M1810 464.8h1M1824 464.8h1M1826 464.8h1M1835 464.8h1M1836 464.8h1M1840 464.8h1M1805 466.8h1M1813 466.8h1M1821 466.8h1M1834 466.8h1M1843 466.8h1M1844 466.8h1M1797 468.8h1M1793 470.8h1M1794 470.8h1M1795 470.8h1M1821 476.8h1M1823 476.8h1M1824 476.8h1M1826 476.8h1M1827 476.8h1M1829 476.8h1M1801 482.8h1M1807 482.8h1M1809 482.8h1M1810 482.8h1M1811 482.8h1M1817 482.8h1M1819 482.8h1M1827 482.8h1M1833 482.8h1M1798 486.8h1M1805 486.8h1M1813 486.8h1M1815 486.8h1M1803 488.8h1M1808 488.8h1M1809 488.8h1M1807 490.8h1M1804 492.8h1M1806 492.8h1M1812 492.8h1M1820 492.8h1M1822 492.8h1M1823 492.8h1M1824 492.8h1M1830 492.8h1M1831 492.8h1M1797 494.8h1M1798 494.8h1M1799 494.8h1M1795 496.8h1M1802 496.8h1M1803 498.8h1M1808 498.8h1M1809 498.8h1M1807 500.8h1M1804 502.8h1M1806 502.8h1M1808 502.8h1M1809 502.8h1M1810 502.8h1M1816 502.8h1M1817 502.8h1M1797 504.8h1M1798 504.8h1M1799 504.8h1M1795 506.8h1M1793 508.8h1M1794 508.8h1M1822 514.8h1M1824 514.8h1M1825 514.8h1M1827 514.8h1M1828 514.8h1M1830 514.8h1M1801 520.8h1M1807 520.8h1M1809 520.8h1M1810 520.8h1M1811 520.8h1M1817 520.8h1M1819 520.8h1M1827 520.8h1M1833 520.8h1M1798 524.8h1M1805 524.8h1M1813 524.8h1M1815 524.8h1M1803 526.8h1M1808 526.8h1M1809 526.8h1M1807 528.8h1M1804 530.8h1M1806 530.8h1M1812 530.8h1M1820 530.8h1M1822 530.8h1M1823 530.8h1M1824 530.8h1M1830 530.8h1M1831 530.8h1M1797 532.8h1M1798 532.8h1M1799 532.8h1M1795 534.8h1M1802 534.8h1M1803 536.8h1M1808 536.8h1M1809 536.8h1M1807 538.8h1M1804 540.8h1M1806 540.8h1M1808 540.8h1M1809 540.8h1M1810 540.8h1M1816 540.8h1M1817 540.8h1M1797 542.8h1M1798 542.8h1M1799 542.8h1M1795 544.8h1M1793 546.8h1M1794 546.8h1M1819 552.8h1M1821 552.8h1M1826 552.8h1M1835 552.8h1M1837 552.8h1M1838 552.8h1M1840 552.8h1M1846 552.8h1M1853 552.8h1M1867 552.8h1M1869 552.8h1M1870 552.8h1M1872 552.8h1M1798 554.8h1M1805 554.8h1M1806 554.8h1M1813 554.8h1M1819 554.8h1M1820 554.8h1M1821 554.8h1M1833 554.8h1M1834 554.8h1M1841 554.8h1M1846 554.8h1M1847 554.8h1M1848 554.8h1M1856 554.8h1M1857 554.8h1M1864 554.8h1M1869 554.8h1M1870 554.8h1M1871 554.8h1M1880 554.8h1M1882 554.8h1M1803 556.8h1M1795 558.8h1M1801 566.8h1M1807 566.8h1M1809 566.8h1M1810 566.8h1M1811 566.8h1M1817 566.8h1M1819 566.8h1M1827 566.8h1M1833 566.8h1M1801 570.8h1M1806 570.8h1M1807 570.8h1M1805 572.8h1M1802 574.8h1M1804 574.8h1M1806 574.8h1M1807 574.8h1M1808 574.8h1M1814 574.8h1M1815 574.8h1M1795 576.8h1M1796 576.8h1M1797 576.8h1M1793 578.8h1M1794 578.8h1M1819 584.8h1M1821 584.8h1M1826 584.8h1M1835 584.8h1M1837 584.8h1M1838 584.8h1M1840 584.8h1M1846 584.8h1M1853 584.8h1M1867 584.8h1M1869 584.8h1M1870 584.8h1M1872 584.8h1M1798 586.8h1M1805 586.8h1M1806 586.8h1M1813 586.8h1M1819 586.8h1M1820 586.8h1M1821 586.8h1M1833 586.8h1M1834 586.8h1M1841 586.8h1M1846 586.8h1M1847 586.8h1M1848 586.8h1M1856 586.8h1M1857 586.8h1M1864 586.8h1M1869 586.8h1M1870 586.8h1M1871 586.8h1M1880 586.8h1M1882 586.8h1M1803 588.8h1M1795 590.8h1M1801 598.8h1M1807 598.8h1M1809 598.8h1M1810 598.8h1M1811 598.8h1M1817 598.8h1M1819 598.8h1M1827 598.8h1M1833 598.8h1M1801 602.8h1M1806 602.8h1M1807 602.8h1M1805 604.8h1M1802 606.8h1M1804 606.8h1M1806 606.8h1M1807 606.8h1M1808 606.8h1M1814 606.8h1M1815 606.8h1M1795 608.8h1M1796 608.8h1M1797 608.8h1M1793 610.8h1M1794 610.8h1M1806 616.8h1M1814 616.8h1M1815 616.8h1M1817 616.8h1M1818 616.8h1M1820 616.8h1M1797 620.8h1M1802 620.8h1M1837 622.8h1M1856 622.8h1M1799 624.8h1M1814 626.8h1M1822 626.8h1M1835 626.8h1M1799 628.8h1M1800 628.8h1M1797 630.8h1M1797 632.8h1M1802 632.8h1M1803 632.8h1M1807 632.8h1M1809 632.8h1M1810 632.8h1M1812 632.8h1M1802 634.8h1M1806 634.8h1M1811 634.8h1M1820 634.8h1M1821 634.8h1M1827 634.8h1M1829 634.8h1M1810 638.8h1M1820 638.8h1M1832 638.8h1M1833 638.8h1M1810 640.8h1M1820 640.8h1M1831 640.8h1M1832 640.8h1M1810 642.8h1M1820 642.8h1M1828 642.8h1M1829 642.8h1M1810 644.8h1M1820 644.8h1M1828 644.8h1M1829 644.8h1M1810 646.8h1M1820 646.8h1M1830 646.8h1M1831 646.8h1M1810 648.8h1M1820 648.8h1M1828 648.8h1M1829 648.8h1M1810 650.8h1M1820 650.8h1M1844 650.8h1M1845 650.8h1M1810 652.8h1M1820 652.8h1M1827 652.8h1M1828 652.8h1M1810 654.8h1M1820 654.8h1M1826 654.8h1M1827 654.8h1M1806 658.8h1M1814 658.8h1M1818 658.8h1M1823 658.8h1M1831 658.8h1M1835 658.8h1M1837 658.8h1M1848 658.8h1M1852 658.8h1M1853 658.8h1M1854 658.8h1M1799 660.8h1M1809 660.8h1M1813 660.8h1M1818 660.8h1M1827 660.8h1M1828 660.8h1M1837 660.8h1M1838 660.8h1M1843 660.8h1M1848 660.8h1M1856 660.8h1M1857 660.8h1M1862 660.8h1M1864 660.8h1M1806 662.8h1M1807 662.8h1M1807 664.8h1M1816 664.8h1M1807 666.8h1M1812 666.8h1M1817 666.8h1M1825 666.8h1M1801 668.8h1M1802 668.8h1M1803 668.8h1M1799 670.8h1M1809 670.8h1M1813 670.8h1M1818 670.8h1M1827 670.8h1M1828 670.8h1M1837 670.8h1M1838 670.8h1M1843 670.8h1M1848 670.8h1M1856 670.8h1M1857 670.8h1M1862 670.8h1M1864 670.8h1M1806 672.8h1M1807 672.8h1M1807 674.8h1M1816 674.8h1M1807 676.8h1M1812 676.8h1M1817 676.8h1M1825 676.8h1M1801 678.8h1M1802 678.8h1M1803 678.8h1M1799 680.8h1M1809 680.8h1M1813 680.8h1M1818 680.8h1M1827 680.8h1M1828 680.8h1M1837 680.8h1M1838 680.8h1M1843 680.8h1M1848 680.8h1M1856 680.8h1M1857 680.8h1M1862 680.8h1M1864 680.8h1M1806 682.8h1M1807 682.8h1M1807 684.8h1M1816 684.8h1M1807 686.8h1M1812 686.8h1M1817 686.8h1M1825 686.8h1M1801 688.8h1M1802 688.8h1M1803 688.8h1M1799 690.8h1M1809 690.8h1M1813 690.8h1M1818 690.8h1M1827 690.8h1M1828 690.8h1M1837 690.8h1M1838 690.8h1M1843 690.8h1M1848 690.8h1M1856 690.8h1M1857 690.8h1M1862 690.8h1M1864 690.8h1M1806 692.8h1M1807 692.8h1M1807 694.8h1M1816 694.8h1M1807 696.8h1M1812 696.8h1M1817 696.8h1M1825 696.8h1M1801 698.8h1M1802 698.8h1M1803 698.8h1M1799 700.8h1M1809 700.8h1M1813 700.8h1M1818 700.8h1M1827 700.8h1M1828 700.8h1M1837 700.8h1M1838 700.8h1M1843 700.8h1M1848 700.8h1M1856 700.8h1M1857 700.8h1M1862 700.8h1M1864 700.8h1M1806 702.8h1M1807 702.8h1M1807 704.8h1M1816 704.8h1M1807 706.8h1M1812 706.8h1M1817 706.8h1M1825 706.8h1M1801 708.8h1M1802 708.8h1M1803 708.8h1M1799 710.8h1M1809 710.8h1M1813 710.8h1M1818 710.8h1M1827 710.8h1M1828 710.8h1M1837 710.8h1M1838 710.8h1M1843 710.8h1M1848 710.8h1M1856 710.8h1M1857 710.8h1M1862 710.8h1M1864 710.8h1M1806 712.8h1M1807 712.8h1M1807 714.8h1M1816 714.8h1M1807 716.8h1M1812 716.8h1M1817 716.8h1M1825 716.8h1M1801 718.8h1M1802 718.8h1M1803 718.8h1M1799 720.8h1M1797 722.8h1M1798 722.8h1M1797 724.8h1M1803 724.8h1M1804 724.8h1M1808 724.8h1M1810 724.8h1M1811 724.8h1M1813 724.8h1M1802 726.8h1M1806 726.8h1M1815 726.8h1M1820 726.8h1M1829 726.8h1M1830 726.8h1M1850 726.8h1M1852 726.8h1M1806 728.8h1M1807 728.8h1M1807 730.8h1M1816 730.8h1M1807 732.8h1M1845 732.8h1M1801 734.8h1M1802 734.8h1M1803 734.8h1M1810 736.8h1M1820 736.8h1M1832 736.8h1M1833 736.8h1M1810 738.8h1M1820 738.8h1M1831 738.8h1M1832 738.8h1M1810 740.8h1M1820 740.8h1M1828 740.8h1M1829 740.8h1M1810 742.8h1M1820 742.8h1M1828 742.8h1M1829 742.8h1M1810 744.8h1M1820 744.8h1M1830 744.8h1M1831 744.8h1M1810 746.8h1M1820 746.8h1M1828 746.8h1M1829 746.8h1M1810 748.8h1M1820 748.8h1M1844 748.8h1M1845 748.8h1M1810 750.8h1M1820 750.8h1M1827 750.8h1M1828 750.8h1M1810 752.8h1M1820 752.8h1M1826 752.8h1M1827 752.8h1M1806 756.8h1M1814 756.8h1M1818 756.8h1M1823 756.8h1M1831 756.8h1M1835 756.8h1M1837 756.8h1M1848 756.8h1M1852 756.8h1M1853 756.8h1M1854 756.8h1M1799 758.8h1M1806 758.8h1M1806 760.8h1M1807 760.8h1M1807 762.8h1M1816 762.8h1M1807 764.8h1M1855 764.8h1M1801 766.8h1M1802 766.8h1M1803 766.8h1M1799 768.8h1M1797 770.8h1M1798 770.8h1M1799 770.8h1M1793 772.8h1M1794 772.8h1M1812 786.8h1M1820 786.8h1M1826 786.8h1M1837 786.8h1M1839 786.8h1M1840 786.8h1M1842 786.8h1M1807 788.8h1M1821 788.8h1M1800 790.8h1M1815 790.8h1M1816 790.8h1M1817 790.8h1M1820 790.8h1M1825 790.8h1M1826 790.8h1M1827 790.8h1M1804 792.8h1M1811 792.8h1M1817 792.8h1M1818 792.8h1M1809 794.8h1M1815 794.8h1M1816 794.8h1M1817 794.8h1M1799 800.8h1M1804 800.8h1M1843 800.8h1M1884 800.8h1M1886 800.8h1M1808 802.8h1M1810 802.8h1M1811 802.8h1M1812 802.8h1M1799 804.8h1M1800 804.8h1M1801 804.8h1M1806 804.8h1M1807 804.8h1M1811 804.8h1M1813 804.8h1M1814 804.8h1M1816 804.8h1M1804 806.8h1M1808 806.8h1M1813 806.8h1M1822 806.8h1M1823 806.8h1M1829 806.8h1M1831 806.8h1M1806 810.8h1M1810 810.8h1M1815 810.8h1M1820 810.8h1M1826 810.8h1M1828 810.8h1M1818 812.8h1M1859 812.8h1M1816 814.8h1M1821 814.8h1M1826 814.8h1M1831 814.8h1M1819 816.8h1M1829 816.8h1M1834 816.8h1M1838 816.8h1M1839 816.8h1M1841 816.8h1M1852 816.8h1M1857 816.8h1M1858 816.8h1M1867 816.8h1M1875 816.8h1M1882 816.8h1M1883 816.8h1M1818 818.8h1M1826 818.8h1M1831 818.8h1M1836 818.8h1M1842 818.8h1M1843 818.8h1M1810 820.8h1M1814 820.8h1M1819 820.8h1M1824 820.8h1M1826 820.8h1M1834 820.8h1M1839 820.8h1M1848 820.8h1M1849 820.8h1M1812 822.8h1M1817 822.8h1M1822 822.8h1M1826 822.8h1M1832 822.8h1M1815 824.8h1M1805 826.8h1M1812 826.8h1M1818 828.8h1M1826 828.8h1M1831 828.8h1M1836 828.8h1M1842 828.8h1M1843 828.8h1M1810 830.8h1M1814 830.8h1M1819 830.8h1M1827 830.8h1M1829 830.8h1M1837 830.8h1M1842 830.8h1M1850 830.8h1M1851 830.8h1M1812 832.8h1M1817 832.8h1M1822 832.8h1M1840 832.8h1M1815 834.8h1M1805 836.8h1M1812 836.8h1M1818 840.8h1M1828 840.8h1M1833 840.8h1M1838 840.8h1M1846 840.8h1M1849 840.8h1M1850 840.8h1M1810 842.8h1M1814 842.8h1M1819 842.8h1M1826 842.8h1M1828 842.8h1M1836 842.8h1M1841 842.8h1M1846 842.8h1M1847 842.8h1M1812 844.8h1M1817 844.8h1M1822 844.8h1M1835 844.8h1M1842 844.8h1M1815 846.8h1" stroke="#b4b4b4" stroke-width="1.500" opacity=".62" fill="none"/>
<path d="M1791 120.8h6M1804 120.8h4M1791 122.8h6M1803 122.8h4M1791 124.8h6M1812 124.8h4M1791 126.8h6M1859 126.8h4M1791 128.8h6M1803 128.8h4M1791 130.8h6M1804 130.8h4M1791 132.8h6M1793 152.8h4M1791 154.8h6M1804 154.8h4M1791 156.8h6M1816 156.8h4M1791 158.8h6M1805 158.8h4M1791 160.8h6M1803 160.8h4M1791 162.8h6M1807 162.8h4M1791 164.8h6M1807 164.8h4M1791 166.8h6M1811 166.8h4M1791 168.8h6M1809 168.8h4M1791 170.8h6M1806 170.8h4M1791 172.8h6M1812 172.8h4M1791 174.8h6M1807 174.8h4M1791 176.8h6M1823 176.8h4M1791 178.8h6M1805 178.8h4M1791 180.8h6M1850 180.8h4M1791 182.8h6M1831 182.8h4M1791 184.8h6M1804 184.8h4M1791 186.8h6M1800 186.8h2M1807 186.8h4M1791 188.8h6M1804 188.8h4M1791 190.8h6M1793 208.8h4M1791 210.8h6M1810 210.8h4M1791 212.8h6M1819 212.8h4M1791 214.8h6M1821 214.8h4M1791 216.8h6M1819 216.8h4M1791 218.8h6M1803 218.8h4M1791 220.8h6M1805 220.8h4M1791 222.8h6M1819 222.8h4M1791 224.8h6M1805 224.8h4M1791 226.8h6M1806 226.8h4M1791 228.8h6M1843 228.8h4M1791 230.8h6M1820 230.8h4M1791 232.8h6M1816 232.8h4M1791 234.8h6M1810 234.8h4M1791 236.8h6M1803 236.8h4M1859 302.8h2M1867 304.8h2M1845 308.8h2M1829 368.8h2M1814 370.8h2M1836 372.8h2M1826 374.8h2M1795 378.8h2M1824 426.8h2M1838 428.8h2M1827 432.8h2M1797 462.8h2M1795 486.8h2M1797 496.8h4M1795 524.8h2M1797 534.8h4M1795 554.8h2M1797 556.8h6M1795 586.8h2M1797 588.8h6M1795 618.8h5M1799 634.8h2M1801 660.8h4M1806 660.8h2M1801 670.8h4M1806 670.8h2M1801 680.8h4M1806 680.8h2M1801 690.8h4M1806 690.8h2M1801 700.8h4M1806 700.8h2M1801 710.8h4M1806 710.8h2M1799 726.8h2M1801 758.8h4M1797 798.8h5M1801 806.8h2M1803 810.8h2M1807 820.8h2M1809 824.8h6M1807 826.8h4M1807 830.8h2M1809 834.8h6M1807 836.8h4M1807 842.8h2M1809 846.8h6" stroke="#c586c0" stroke-width="1.500" opacity=".62" fill="none"/>
<path d="M1798 120.8h5M1798 122.8h4M1800 124.8h9M1798 126.8h5M1807 126.8h8M1817 126.8h10M1829 126.8h9M1840 126.8h6M1848 126.8h8M1798 128.8h4M1798 130.8h5M1793 134.8h3M1793 136.8h7M1793 138.8h5M1793 140.8h10M1793 142.8h6M1793 144.8h16M1793 146.8h5M1793 148.8h7M1793 150.8h4M1798 154.8h5M1798 156.8h17M1798 158.8h6M1798 160.8h4M1798 162.8h8M1798 164.8h8M1798 166.8h12M1798 168.8h10M1798 170.8h7M1798 172.8h13M1798 174.8h8M1798 176.8h24M1798 178.8h6M1800 180.8h6M1808 180.8h4M1814 180.8h5M1821 180.8h12M1835 180.8h12M1800 182.8h11M1813 182.8h15M1798 184.8h5M1803 186.8h3M1798 188.8h5M1793 192.8h6M1793 194.8h5M1793 196.8h8M1793 198.8h13M1793 200.8h10M1793 202.8h6M1793 204.8h6M1793 206.8h4M1798 210.8h11M1800 212.8h16M1800 214.8h18M1800 216.8h16M1798 218.8h4M1798 220.8h6M1800 222.8h16M1798 224.8h6M1798 226.8h7M1800 228.8h16M1818 228.8h22M1800 230.8h17M1800 232.8h13M1798 234.8h11M1798 236.8h4M1795 310.8h5M1797 314.8h6M1797 316.8h8M1811 318.8h3M1819 318.8h5M1830 318.8h7M1848 318.8h8M1799 322.8h7M1799 324.8h2M1799 326.8h2M1799 328.8h5M1799 330.8h6M1799 332.8h12M1799 334.8h7M1797 342.8h3M1799 344.8h7M1799 346.8h6M1797 350.8h5M1799 352.8h8M1799 354.8h6M1799 378.8h6M1817 378.8h6M1810 380.8h6M1812 386.8h4M1805 390.8h5M1805 392.8h7M1795 402.8h6M1795 406.8h8M1795 410.8h13M1795 414.8h11M1795 418.8h6M1807 432.8h5M1813 432.8h13M1830 432.8h7M1811 438.8h5M1817 438.8h13M1801 462.8h4M1799 466.8h6M1806 466.8h7M1836 466.8h7M1799 486.8h6M1806 486.8h7M1797 488.8h6M1799 490.8h8M1799 492.8h5M1808 492.8h4M1825 492.8h4M1797 498.8h6M1799 500.8h8M1799 502.8h5M1811 502.8h4M1799 524.8h6M1806 524.8h7M1797 526.8h6M1799 528.8h8M1799 530.8h5M1808 530.8h4M1825 530.8h4M1797 536.8h6M1799 538.8h8M1799 540.8h5M1811 540.8h4M1799 554.8h5M1808 554.8h5M1814 554.8h4M1836 554.8h5M1842 554.8h3M1859 554.8h5M1865 554.8h3M1795 570.8h6M1797 572.8h8M1797 574.8h5M1809 574.8h4M1799 586.8h5M1808 586.8h5M1814 586.8h4M1836 586.8h5M1842 586.8h3M1859 586.8h5M1865 586.8h3M1795 602.8h6M1797 604.8h8M1797 606.8h5M1809 606.8h4M1801 618.8h5M1801 626.8h13M1816 626.8h6M1823 626.8h12M1804 632.8h3M1803 634.8h3M1807 634.8h4M1812 634.8h7M1801 638.8h9M1801 640.8h9M1801 642.8h9M1801 644.8h9M1801 646.8h9M1801 648.8h9M1801 650.8h9M1801 652.8h9M1801 654.8h9M1801 658.8h5M1815 658.8h3M1819 658.8h4M1824 658.8h7M1839 658.8h9M1810 660.8h3M1814 660.8h4M1819 660.8h7M1840 660.8h3M1844 660.8h4M1849 660.8h6M1803 664.8h4M1803 666.8h4M1809 666.8h3M1813 666.8h4M1818 666.8h7M1810 670.8h3M1814 670.8h4M1819 670.8h7M1840 670.8h3M1844 670.8h4M1849 670.8h6M1803 674.8h4M1803 676.8h4M1809 676.8h3M1813 676.8h4M1818 676.8h7M1810 680.8h3M1814 680.8h4M1819 680.8h7M1840 680.8h3M1844 680.8h4M1849 680.8h6M1803 684.8h4M1803 686.8h4M1809 686.8h3M1813 686.8h4M1818 686.8h7M1810 690.8h3M1814 690.8h4M1819 690.8h7M1840 690.8h3M1844 690.8h4M1849 690.8h6M1803 694.8h4M1803 696.8h4M1809 696.8h3M1813 696.8h4M1818 696.8h7M1810 700.8h3M1814 700.8h4M1819 700.8h7M1840 700.8h3M1844 700.8h4M1849 700.8h6M1803 704.8h4M1803 706.8h4M1809 706.8h3M1813 706.8h4M1818 706.8h7M1810 710.8h3M1814 710.8h4M1819 710.8h7M1840 710.8h3M1844 710.8h4M1849 710.8h6M1803 714.8h4M1803 716.8h4M1809 716.8h3M1813 716.8h4M1818 716.8h7M1805 724.8h3M1803 726.8h3M1807 726.8h8M1816 726.8h4M1821 726.8h7M1803 730.8h4M1803 732.8h4M1801 736.8h9M1801 738.8h9M1801 740.8h9M1801 742.8h9M1801 744.8h9M1801 746.8h9M1801 748.8h9M1801 750.8h9M1801 752.8h9M1801 756.8h5M1815 756.8h3M1819 756.8h4M1824 756.8h7M1839 756.8h9M1803 762.8h4M1803 764.8h4M1795 790.8h5M1819 790.8h1M1797 792.8h7M1812 792.8h5M1797 794.8h12M1803 798.8h5M1801 802.8h7M1808 804.8h3M1805 806.8h3M1809 806.8h4M1814 806.8h7M1807 810.8h3M1811 810.8h4M1816 810.8h4M1821 810.8h5M1828 818.8h3M1832 818.8h4M1837 818.8h5M1811 820.8h3M1815 820.8h4M1820 820.8h4M1828 820.8h6M1809 822.8h3M1813 822.8h4M1818 822.8h4M1823 822.8h2M1828 828.8h3M1832 828.8h4M1837 828.8h5M1811 830.8h3M1815 830.8h4M1820 830.8h7M1831 830.8h6M1809 832.8h3M1813 832.8h4M1818 832.8h4M1823 832.8h17M1830 840.8h3M1834 840.8h4M1839 840.8h7M1847 840.8h2M1811 842.8h3M1815 842.8h4M1820 842.8h6M1830 842.8h6M1809 844.8h3M1813 844.8h4M1818 844.8h4M1823 844.8h11" stroke="#9cdcfe" stroke-width="1.500" opacity=".62" fill="none"/>
<path d="M1791 240.8h5M1793 242.8h5M1852 242.8h10M1793 244.8h5M1850 244.8h10M1793 246.8h5M1854 246.8h10M1793 248.8h5M1853 248.8h13M1793 250.8h5M1855 250.8h13M1793 252.8h5M1851 252.8h14M1793 254.8h5M1853 254.8h11M1793 256.8h5M1854 256.8h13M1793 258.8h5M1847 258.8h9M1793 260.8h5M1793 262.8h5M1793 264.8h5M1793 266.8h5M1793 268.8h5M1793 270.8h5M1855 270.8h11M1793 272.8h5M1793 274.8h5M1853 274.8h9M1793 276.8h5M1849 276.8h9M1793 278.8h5M1793 280.8h5M1853 280.8h15M1793 282.8h5M1852 282.8h12M1793 284.8h5M1853 284.8h9M1793 286.8h5M1793 290.8h5M1793 292.8h5M1793 294.8h5M1812 294.8h4M1793 296.8h5M1793 300.8h5M1793 302.8h5M1793 304.8h5M1793 308.8h5M1848 308.8h5M1795 366.8h5M1795 368.8h5M1795 370.8h5M1795 372.8h5M1795 374.8h5M1809 378.8h4M1827 378.8h9M1806 388.8h5M1803 394.8h4M1793 426.8h5M1793 428.8h5M1793 430.8h5M1793 436.8h5M1793 444.8h5M1807 446.8h4M1793 450.8h5M1811 452.8h4M1795 460.8h5M1809 462.8h4M1799 464.8h5M1793 476.8h5M1795 482.8h5M1793 514.8h5M1795 520.8h5M1793 552.8h5M1795 566.8h5M1793 584.8h5M1795 598.8h5M1793 616.8h5M1808 616.8h5M1823 634.8h4M1793 786.8h5M1814 786.8h5M1795 788.8h5M1825 806.8h4M1805 812.8h5M1805 814.8h5M1805 816.8h5M1821 816.8h3M1828 822.8h4M1837 844.8h5" stroke="#569cd6" stroke-width="1.500" opacity=".62" fill="none"/>
<path d="M1797 240.8h6M1840 242.8h11M1839 244.8h10M1842 246.8h11M1839 248.8h13M1841 250.8h13M1836 252.8h14M1840 254.8h12M1840 256.8h13M1837 258.8h9M1845 260.8h5M1832 262.8h14M1834 264.8h6M1837 266.8h5M1834 268.8h4M1843 270.8h11M1841 272.8h19M1843 274.8h9M1838 276.8h10M1841 278.8h15M1837 280.8h15M1839 282.8h12M1842 284.8h10M1821 430.8h5M1827 430.8h10M1838 430.8h11M1826 436.8h5M1832 436.8h10M1843 436.8h11" stroke="#4ec9b0" stroke-width="1.500" opacity=".62" fill="none"/>
<path d="M1799 242.8h15M1799 244.8h16M1799 246.8h11M1799 248.8h11M1799 250.8h10M1799 252.8h13M1799 254.8h11M1799 256.8h16M1799 258.8h13M1799 260.8h18M1799 262.8h10M1799 264.8h13M1799 266.8h16M1799 268.8h13M1799 270.8h18M1799 272.8h14M1799 274.8h12M1799 276.8h11M1799 278.8h18M1799 280.8h11M1799 282.8h15M1799 284.8h18M1799 286.8h8M1799 290.8h6M1799 292.8h8M1810 292.8h6M1817 292.8h8M1799 294.8h3M1799 296.8h10M1820 296.8h4M1826 296.8h2M1801 300.8h4M1807 300.8h6M1829 300.8h11M1801 302.8h8M1811 302.8h14M1841 302.8h16M1862 302.8h8M1801 304.8h9M1812 304.8h12M1826 304.8h7M1849 304.8h16M1870 304.8h13M1799 308.8h10M1814 308.8h8M1835 308.8h2M1801 366.8h6M1817 366.8h6M1824 366.8h5M1830 366.8h3M1801 368.8h8M1812 368.8h6M1819 368.8h5M1825 368.8h3M1832 368.8h6M1801 370.8h4M1808 370.8h5M1817 370.8h6M1801 372.8h9M1813 372.8h6M1820 372.8h5M1826 372.8h9M1839 372.8h6M1801 374.8h5M1809 374.8h7M1829 374.8h6M1799 426.8h4M1814 426.8h8M1827 426.8h7M1799 428.8h14M1824 428.8h12M1841 428.8h7M1799 430.8h11M1814 430.8h5M1799 436.8h16M1819 436.8h5M1799 444.8h11M1799 450.8h17M1803 460.8h4M1812 460.8h4M1821 460.8h6M1828 460.8h5M1807 464.8h3M1812 464.8h11M1828 464.8h6M1799 476.8h21M1803 482.8h4M1812 482.8h4M1821 482.8h6M1828 482.8h5M1799 514.8h22M1803 520.8h4M1812 520.8h4M1821 520.8h6M1828 520.8h5M1799 552.8h19M1822 552.8h4M1828 552.8h7M1841 552.8h5M1848 552.8h5M1854 552.8h13M1803 566.8h4M1812 566.8h4M1821 566.8h6M1828 566.8h5M1799 584.8h19M1822 584.8h4M1828 584.8h7M1841 584.8h5M1848 584.8h5M1854 584.8h13M1803 598.8h4M1812 598.8h4M1821 598.8h6M1828 598.8h5M1799 616.8h6M1799 786.8h12M1821 786.8h5M1828 786.8h9M1801 788.8h5M1811 812.8h6M1811 814.8h4M1818 814.8h3M1822 814.8h4M1827 814.8h4M1811 816.8h7M1830 816.8h4M1843 816.8h9M1853 816.8h4M1860 816.8h7M1876 816.8h6" stroke="#4fc1ff" stroke-width="1.500" opacity=".62" fill="none"/>
<path d="M1817 242.8h20M1818 244.8h18M1813 246.8h26M1813 248.8h23M1812 250.8h26M1815 252.8h18M1813 254.8h24M1818 256.8h19M1815 258.8h19M1820 260.8h24M1812 262.8h19M1815 264.8h18M1818 266.8h18M1815 268.8h18M1820 270.8h20M1816 272.8h24M1814 274.8h26M1813 276.8h22M1820 278.8h20M1813 280.8h21M1817 282.8h19M1820 284.8h19M1810 286.8h13M1808 290.8h9M1805 294.8h6M1812 296.8h7M1818 300.8h10M1830 302.8h10M1838 304.8h10M1793 364.8h9M1810 366.8h6M1817 374.8h3M1797 380.8h12M1795 386.8h16M1795 388.8h10M1795 390.8h9M1795 392.8h9M1795 394.8h7M1806 426.8h7M1816 428.8h7M1795 432.8h11M1795 438.8h15M1795 446.8h11M1795 452.8h15M1793 458.8h9M1814 466.8h7M1804 488.8h4M1804 498.8h4M1804 526.8h4M1804 536.8h4M1802 570.8h4M1802 602.8h4M1798 620.8h4M1798 632.8h4M1811 638.8h9M1811 640.8h9M1811 642.8h9M1811 644.8h9M1811 646.8h9M1811 648.8h9M1811 650.8h9M1811 652.8h9M1811 654.8h9M1807 658.8h7M1801 662.8h5M1801 672.8h5M1801 682.8h5M1801 692.8h5M1801 702.8h5M1801 712.8h5M1798 724.8h5M1801 728.8h5M1811 736.8h9M1811 738.8h9M1811 740.8h9M1811 742.8h9M1811 744.8h9M1811 746.8h9M1811 748.8h9M1811 750.8h9M1811 752.8h9M1807 756.8h7M1801 760.8h5M1801 790.8h14M1821 790.8h4M1805 792.8h6M1810 794.8h5M1800 800.8h4M1802 804.8h4M1825 816.8h4M1835 816.8h3M1868 816.8h7M1805 818.8h13M1835 820.8h4M1805 828.8h13M1838 830.8h4M1805 840.8h13M1837 842.8h4" stroke="#dcdcaa" stroke-width="1.500" opacity=".62" fill="none"/>
<path d="M1839 308.8h3M1816 318.8h1M1826 318.8h2M1803 324.8h1M1803 326.8h1M1807 330.8h2M1807 346.8h1M1807 354.8h1M1850 658.8h1M1859 660.8h3M1859 670.8h3M1859 680.8h3M1859 690.8h3M1859 700.8h3M1859 710.8h3M1850 756.8h1" stroke="#b5cea8" stroke-width="1.500" opacity=".62" fill="none"/>
<path d="M1795 396.8h63M1795 400.8h63M1795 404.8h63M1795 408.8h63M1795 412.8h63M1795 416.8h63M1793 424.8h11M1793 474.8h20M1795 478.8h28M1795 480.8h39M1793 512.8h21M1795 516.8h29M1795 518.8h39M1793 550.8h21M1795 560.8h23M1795 562.8h40M1793 582.8h21M1795 592.8h23M1795 594.8h40M1793 614.8h65M1801 636.8h53M1793 776.8h29M1793 778.8h24M1793 780.8h5M1793 784.8h38M1803 808.8h63" stroke="#6a9955" stroke-width="1.500" opacity=".62" fill="none"/>
<rect x="1785.500" y="455" width="2" height="16" fill="#2ea043"/>
<rect x="1902" y="117" width="1" height="731" fill="#2b2b2b" opacity=".8"/>
<rect x="1902.500" y="169" width="1.500" height="6" fill="#2ea043"/>
</svg>
</div>
<div id="panel" class="abs">
<span class="t" style="left:22.73px;top:10px;color:#9d9d9d;font-size:12.6px;transform:scaleX(0.9667);">PROBLEMS</span>
<span class="t" style="left:141.35px;top:10px;color:#9d9d9d;font-size:12.6px;transform:scaleX(0.9771);">OUTPUT</span>
<span class="t" style="left:220.64px;top:10px;color:#9d9d9d;font-size:12.6px;transform:scaleX(0.9515);">DEBUG CONSOLE</span>
<span class="t" style="left:354.36px;top:10px;color:#e7e7e7;font-size:12.6px;transform:scaleX(0.9498);">TERMINAL</span>
<span class="t" style="left:445.04px;top:10px;color:#9d9d9d;font-size:12.6px;transform:scaleX(0.9533);">PORTS</span>
<span class="t" style="left:514.72px;top:10px;color:#9d9d9d;font-size:12.6px;transform:scaleX(0.9273);">GITLENS</span>
<div class="abs" style="left:96.5px;top:11.5px;width:18px;height:18px;border-radius:50%;background:#0078d4"></div>
<svg class="abs" style="left:1245px;top:10px" width="284" height="12" viewBox="1620 858 284 12" fill="none" stroke="#cccccc" stroke-width="1.300"><rect x="1632.600" y="862" width="15.500" height="12" rx="1.500"/><path d="M1656.500 862.500v6M1678 862.500v6M1704 862.500v6" stroke="#b0b0b0"/><rect x="1745.200" y="862.500" width="14" height="12" rx="1"/><path d="M1752.200 862.500v6"/><path d="M1776 865h13M1779.500 865v-2.500h6v2.500" /><path d="M1836.500 860v8" stroke="#5a5a5a" stroke-width="1"/><path d="M1854.600 868v-5.300h4M1868 868v-5.300h-4"/><path d="M1886 863l6 6M1897.500 863l-6 6"/></svg>
</div>
</body></html>
